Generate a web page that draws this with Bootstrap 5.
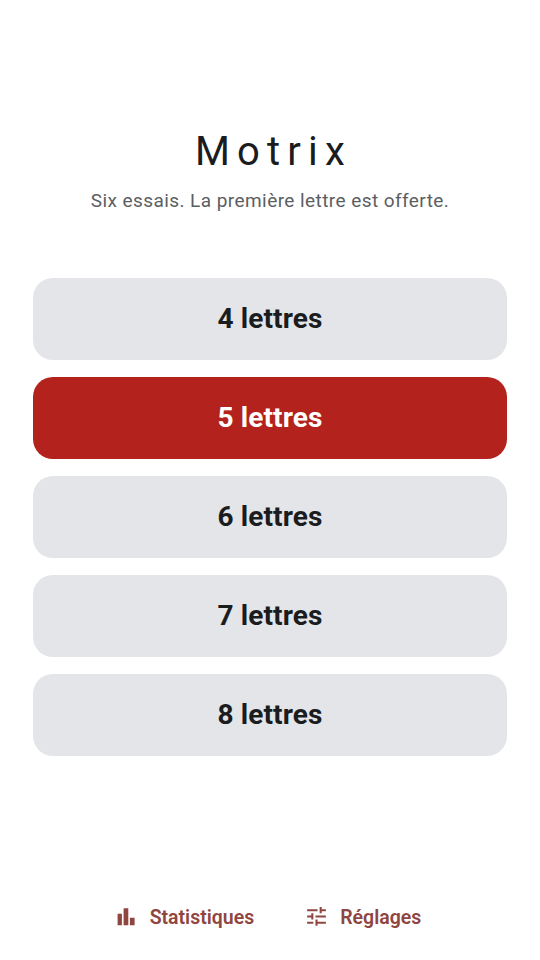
<!DOCTYPE html>
<html lang="fr"><head><meta charset="utf-8">
<link href="https://cdn.jsdelivr.net/npm/bootstrap@5.3.0/dist/css/bootstrap.min.css" rel="stylesheet">
<style>
html,body{height:960px;overflow:hidden;background:#fff;font-family:Roboto,sans-serif}
.app-screen{height:960px;padding:130px 33px 0}
.app-title{font-size:40px;font-weight:400;letter-spacing:7.2px;color:#1a1c1e;line-height:44px;margin:0;padding-left:7px}
.app-sub{font-size:19px;color:#5b5e62;line-height:24px;margin:15px 0 0;letter-spacing:.43px}
.len-list{margin-top:65px;gap:17px}
.len-btn{height:82px;border:0;border-radius:20px;background:#e3e5e9;color:#1a1c1e;font-size:28px;font-weight:700;letter-spacing:.12px;width:100%;padding:0}
.len-btn.is-on{background:#b3221c;color:#fff}
.foot-bar{margin-top:147px;gap:50px;padding-right:6px}
.foot-link{color:#8f4540;font-size:19.5px;font-weight:600;gap:11px;text-decoration:none;background:none;border:0;padding:0}
.foot-link svg{fill:#8f4540}
</style></head><body>
<div class="app-screen d-flex flex-column">
<div class="text-center">
<h1 class="app-title">Motrix</h1>
<p class="app-sub">Six essais. La première lettre est offerte.</p>
</div>
<div class="len-list d-flex flex-column">
<button class="len-btn">4 lettres</button>
<button class="len-btn is-on">5 lettres</button>
<button class="len-btn">6 lettres</button>
<button class="len-btn">7 lettres</button>
<button class="len-btn">8 lettres</button>
</div>
<div class="foot-bar d-flex justify-content-center">
<button class="foot-link d-flex align-items-center"><svg width="26" height="26" viewBox="0 0 26 26"><path d="M4.6 8.7h4.3v11.6H4.6zM10.6 3.3h4.7v17h-4.7zM16.9 12.7h4.7v7.6h-4.7z"/></svg>Statistiques</button>
<button class="foot-link d-flex align-items-center"><svg width="25" height="25" viewBox="0 1 24 24"><path d="M3 17v2h6v-2H3zM3 5v2h10V5H3zm10 16v-2h8v-2h-8v-2h-2v6h2zM7 9v2H3v2h4v2h2V9H7zm14 4v-2H11v2h10zm-6-4h2V7h4V5h-4V3h-2v6z"/></svg>Réglages</button>
</div>
</div>
</body></html>
